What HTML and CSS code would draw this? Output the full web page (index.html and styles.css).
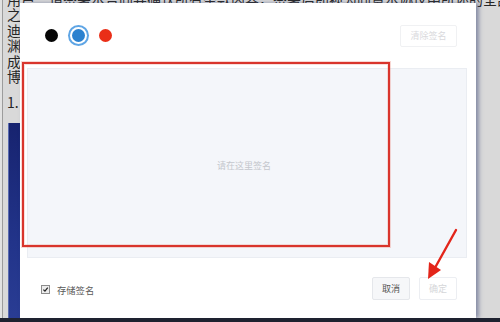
FILE: index.html
```html
<!DOCTYPE html>
<html lang="zh-CN">
<head>
<meta charset="utf-8">
<title>签名</title>
<link rel="stylesheet" href="styles.css">
</head>
<body>
<div class="screen">
  <div class="doc">
    <p class="line">用户：请签署本合同并确认所有条款内容，签署后即视为同意本协议中所述的全部权利与义务之规定</p>
    <p class="line">之后的内容</p>
    <p class="line">迪克的说明</p>
    <p class="line">渊源与背景</p>
    <p class="line">成立的条件</p>
    <p class="line">博览会议程</p>
    <p class="line para">1. 签名说明</p>
    <div class="figure"></div>
  </div>

  <div class="dialog">
    <div class="dlg-head">
      <div class="colors">
        <span class="dot dot-black"></span>
        <span class="dot dot-blue is-selected"></span>
        <span class="dot dot-red"></span>
      </div>
      <button class="btn btn-clear">清除签名</button>
    </div>
    <div class="pad"><span class="hint">请在这里签名</span></div>
    <div class="dlg-foot">
      <label class="save">
        <span class="check"><svg viewBox="0 0 9 9" width="9" height="9"><path d="M1.8 4.6 L3.8 6.6 L7.4 2.2" fill="none" stroke="#222" stroke-width="1.6"/></svg></span>
        <span>存储签名</span>
      </label>
      <div class="actions">
        <button class="btn btn-cancel">取消</button>
        <button class="btn btn-ok">确定</button>
      </div>
    </div>
  </div>

  <div class="mark-box"></div>
  <svg class="mark-arrow" viewBox="0 0 45 60" width="45" height="60">
    <path d="M36 5 L16 41" stroke="#e3251a" stroke-width="2.4" stroke-linecap="round" fill="none"/>
    <polygon points="8,54 9,37 21,45" fill="#e3251a"/>
  </svg>
</div>
<div class="taskbar"></div>
</body>
</html>
```

FILE: styles.css
```css
* { box-sizing: border-box; }
html, body { margin: 0; padding: 0; }
body {
  width: 500px;
  height: 322px;
  overflow: hidden;
  background: #e4e4e4;
  font-family: "Noto Sans CJK SC", "Noto Sans", sans-serif;
}
.screen {
  position: relative;
  height: 318px;
  overflow: hidden;
  background: #e2e2e2;
}
.doc {
  margin: -8.5px 0 0 2px;
  border-left: 1px solid #9c9c9c;
  padding-left: 4px;
  background: #d9d9d9;
  height: 330px;
}
.line {
  margin: 0;
  font-size: 14px;
  line-height: 15.5px;
  color: #262626;
  white-space: nowrap;
}
.line.para { margin-top: 10.75px; }
.figure {
  margin: 12px 0 0 1px;
  width: 12px;
  height: 200px;
  background: linear-gradient(180deg, #17236f 0%, #22348a 60%, #2a3d94 100%);
  border-left: 1px solid #5a6bb0;
}
.dialog {
  position: absolute;
  left: 20px;
  top: 3px;
  width: 456px;
  height: 315px;
  background: #fff;
  box-shadow: 3px 0 4px rgba(70, 80, 125, 0.55);
  display: flex;
  flex-direction: column;
}
.dlg-head {
  height: 65px;
  display: flex;
  align-items: center;
  justify-content: space-between;
  padding: 0 19px 0 25px;
}
.colors {
  display: flex;
  align-items: center;
  gap: 14px;
}
.dot {
  width: 13px;
  height: 13px;
  border-radius: 50%;
  display: block;
}
.dot-black { background: #060606; }
.dot-blue { background: #2b81cf; }
.dot-red { background: #ea2e17; }
.dot.is-selected {
  box-shadow: 0 0 0 2px #fff, 0 0 0 4px #5ea5e5;
}
.btn {
  font-family: "Noto Sans CJK SC", sans-serif;
  font-size: 9px;
  line-height: 1;
  padding: 0;
  border-radius: 2px;
  cursor: pointer;
}
.btn-clear {
  width: 57px;
  height: 22px;
  background: #fff;
  border: 1px solid #f0f1f3;
  color: #d9d9dc;
}
.pad {
  margin: 0 9px 0 7px;
  height: 190px;
  background: #f4f6fa;
  border: 1px solid #eaedf2;
  display: flex;
  align-items: center;
  justify-content: center;
}
.hint {
  font-size: 9px;
  color: #c4c7cd;
  margin: 4px 6px 0 0;
}
.dlg-foot {
  flex: 1;
  display: flex;
  align-items: center;
  justify-content: space-between;
  padding: 0 19px 0 21px;
}
.save {
  display: flex;
  align-items: center;
  gap: 7px;
  font-size: 9.3px;
  color: #5a5a5a;
  margin-top: 3px;
}
.check {
  width: 9px;
  height: 9px;
  border: 1px solid #8c8c8c;
  background: #ececec;
  display: flex;
  align-items: center;
  justify-content: center;
}
.check svg { display: block; }
.actions {
  display: flex;
  gap: 9px;
}
.btn-cancel {
  width: 38px;
  height: 23px;
  background: #f6f7f9;
  border: 1px solid #e5e7eb;
  color: #555;
}
.btn-ok {
  width: 38px;
  height: 23px;
  background: #fff;
  border: 1px solid #eceef2;
  color: #d5d6d9;
}
.mark-box {
  position: absolute;
  left: 22px;
  top: 62px;
  width: 368px;
  height: 185px;
  border: 2px solid #d9352c;
  box-shadow: 0 0 0 1px rgba(235, 140, 130, 0.35), inset 0 0 0 1px rgba(235, 150, 140, 0.3);
}
.mark-arrow {
  position: absolute;
  left: 420px;
  top: 225px;
}
.taskbar {
  height: 4px;
  background: #1e2230;
}
```
